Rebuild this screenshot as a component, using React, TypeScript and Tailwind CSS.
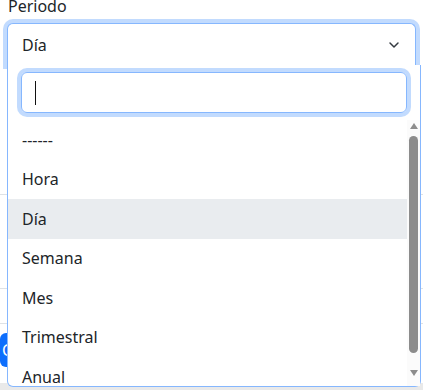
import { ChevronDown } from "lucide-react";

const options = ["------", "Hora", "Día", "Semana", "Mes", "Trimestral", "Anual"];

function FakeScrollbar() {
  return (
    <div className="flex w-[13px] shrink-0 flex-col items-center bg-[#fbfbfb] pt-[3px]">
      <div className="h-0 w-0 border-x-[4px] border-b-[6px] border-x-transparent border-b-[#8c8c8c]" />
      <div className="mt-[7px] h-[217px] w-[9px] rounded-full bg-[#8c8c8c]" />
      <div className="mt-[17px] h-0 w-0 border-x-[4px] border-t-[6px] border-x-transparent border-t-[#8c8c8c]" />
    </div>
  );
}

export default function App() {
  const selected = "Día";

  return (
    <div
      className="relative h-[390px] w-[423px] overflow-hidden bg-white text-[16px] text-[#212529]"
      style={{ fontFamily: '"Noto Sans", "Open Sans", sans-serif' }}
    >
      {/* page behind the open select */}
      <div className="flex flex-col">
        <label className="-mt-[6px] ml-[8px] h-[24px] leading-[24px]">Periodo</label>
        <button className="mx-[7px] mt-[5px] flex h-[42px] items-center justify-between rounded-t-[6px] border border-b-0 border-[#86b7fe] bg-white pl-[14px] pr-[13px] text-left shadow-[0_0_0_4px_rgba(13,110,253,0.25)]">
          <span>{selected}</span>
          <ChevronDown className="h-[16px] w-[16px] text-[#343a40]" strokeWidth={2.2} />
        </button>
        <div className="mt-[129px] border-t border-[#dee2e6]" />
        <div className="mt-[93px] border-t border-[#dee2e6]" />
        <div className="mt-[34px] border-t border-[#dee2e6]" />
        <div className="mt-[9px] flex h-[34px] w-[60px] items-center rounded-[6px] bg-[#0d6efd] pl-[2px] text-white">
          C
        </div>
        <div className="mt-[16px] h-[10px] bg-[#e9e9e9]" />
      </div>

      {/* dropdown */}
      <div className="absolute left-[7px] top-[65px] flex h-[322px] w-[414px] flex-col rounded-b-[6px] border border-t-0 border-[#86b7fe] bg-white">
        <div className="px-[13px] pb-[7px] pt-[7px]">
          <div className="flex h-[41px] items-center rounded-[6px] border border-[#86b7fe] px-[13px] shadow-[0_0_0_4px_rgba(13,110,253,0.25)]">
            <span className="h-[24px] w-px bg-[#111]" />
          </div>
        </div>
        <div className="flex min-h-0 flex-1">
          <ul className="min-w-0 flex-1 overflow-hidden">
            {options.map((o) => (
              <li
                key={o}
                className={`flex h-[39.5px] items-center pl-[14px] ${o === selected ? "bg-[#e9ecef]" : ""}`}
              >
                {o}
              </li>
            ))}
          </ul>
          <FakeScrollbar />
        </div>
      </div>
    </div>
  );
}
